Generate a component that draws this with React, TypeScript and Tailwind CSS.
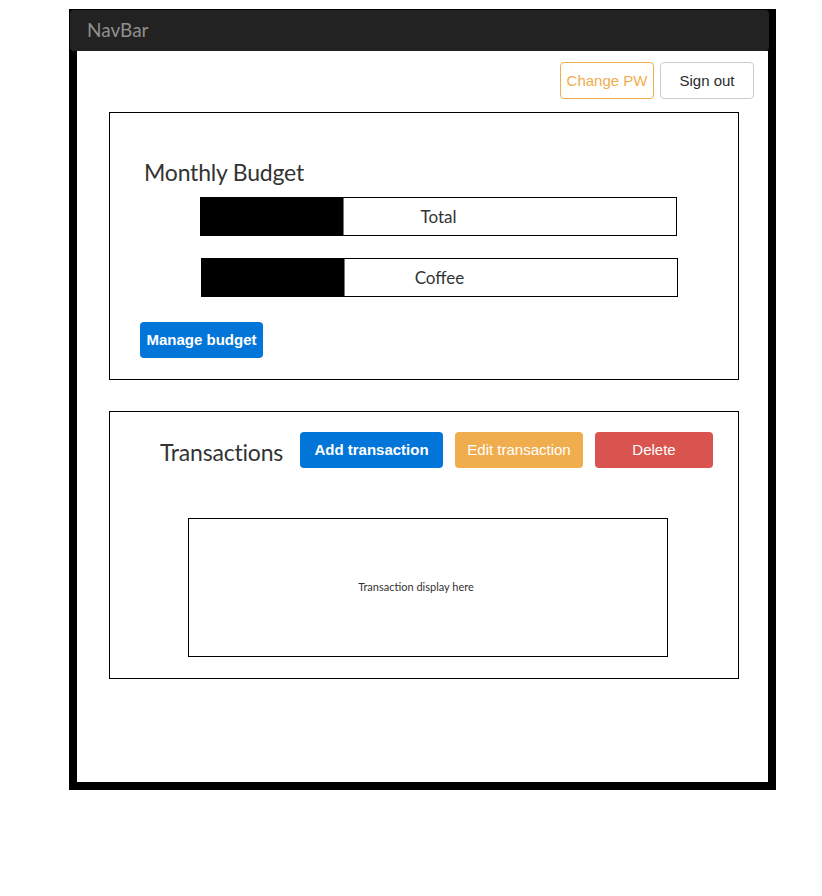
import React from 'react';

const sans = { fontFamily: '"Liberation Sans", Arial, sans-serif' };

interface BudgetBarProps {
  label: string;
  percent: number;
  offset?: string;
}

const BudgetBar: React.FC<BudgetBarProps> = ({ label, percent, offset = '' }) => (
  <div className={`grid w-[477px] h-[39px] border border-black bg-white ${offset}`}>
    <div className="col-start-1 row-start-1 h-full bg-black border-r border-[#777]" style={{ width: `${percent}%` }} />
    <div className="col-start-1 row-start-1 flex items-center justify-center text-[17px] text-[#333]">{label}</div>
  </div>
);

const App: React.FC = () => {
  return (
    <div className="w-[822px] h-[896px] bg-white font-['Lato',sans-serif]">
      <div className="ml-[69px] pt-[9px]">
        <div className="w-[707px] h-[781px] bg-black flex flex-col">
          <div className="mt-[1px] ml-[1px] w-[699px] h-[41px] shrink-0 rounded-[4px] bg-[#222] flex items-center pl-[17px]">
            <span className="text-[19px] text-[#8f8f8f]">NavBar</span>
          </div>

          <div className="ml-[8px] mb-[8px] w-[691px] flex-1 bg-white flex flex-col">
            <div className="flex justify-end gap-[6px] pt-[11px] pr-[14px]" style={sans}>
              <button className="w-[94px] h-[37px] rounded-[4px] border border-[#f0ad4e] text-[#f0ad4e] text-[15px] bg-white pt-px">
                Change PW
              </button>
              <button className="w-[94px] h-[37px] rounded-[4px] border border-[#ccc] text-[#292b2c] text-[15px] bg-white pt-px">
                Sign out
              </button>
            </div>

            <div className="ml-[32px] mt-[13px] w-[630px] h-[268px] border border-black flex flex-col">
              <h2 className="ml-[34px] mt-[44px] text-[23px] tracking-[-0.2px] leading-[30px] text-[#333]">Monthly Budget</h2>
              <BudgetBar label="Total" percent={30} offset="ml-[90px] mt-[10px]" />
              <BudgetBar label="Coffee" percent={30} offset="ml-[91px] mt-[22px]" />
              <div className="ml-[30px] mt-[25px]" style={sans}>
                <button className="w-[123px] h-[36px] rounded-[4px] bg-[#0275d8] text-white text-[15px] font-bold pt-px">
                  Manage budget
                </button>
              </div>
            </div>

            <div className="ml-[32px] mt-[31px] w-[630px] h-[268px] border border-black flex flex-col">
              <div className="flex items-start mt-[20px] ml-[50px]">
                <h2 className="w-[140px] text-[23px] tracking-[-0.2px] leading-[30px] text-[#333] mt-[5px]">Transactions</h2>
                <div className="flex gap-[12px]" style={sans}>
                  <button className="w-[143px] h-[36px] rounded-[4px] bg-[#0275d8] text-white text-[15px] font-bold">
                    Add transaction
                  </button>
                  <button className="w-[128px] h-[36px] rounded-[4px] bg-[#f0ad4e] text-white text-[15px]">
                    Edit transaction
                  </button>
                  <button className="w-[118px] h-[36px] rounded-[4px] bg-[#d9534f] text-white text-[15px]">
                    Delete
                  </button>
                </div>
              </div>
              <div className="ml-[78px] mt-[50px] w-[480px] h-[139px] border border-black flex items-center justify-center pr-[24px]">
                <span className="text-[11px] text-[#333]">Transaction display here</span>
              </div>
            </div>
          </div>
        </div>
      </div>
    </div>
  );
};

export default App;
